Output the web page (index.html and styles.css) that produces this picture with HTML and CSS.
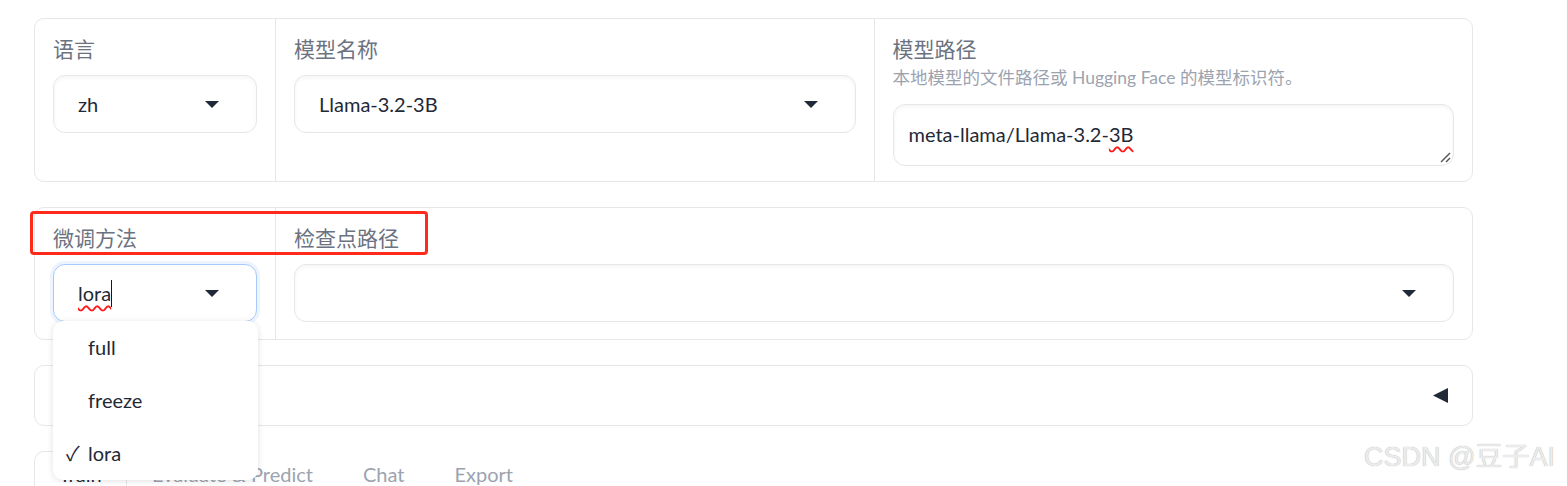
FILE: index.html
```html
<!DOCTYPE html>
<html lang="zh">
<head>
    <meta charset="UTF-8">
    <title>LLaMA Board</title>
    <link rel="stylesheet" href="styles.css">
</head>
<body>
    <div class="page">
        <div class="card">
            <div class="col col-narrow">
                <div class="label">语言</div>
                <div class="field select">
                    <span class="value">zh</span>
                    <svg class="arrow" width="14" height="7" viewBox="0 0 14 7"><polygon points="0,0 14,0 7,7" /></svg>
                </div>
            </div>
            <div class="col">
                <div class="label">模型名称</div>
                <div class="field select">
                    <span class="value">Llama-3.2-3B</span>
                    <svg class="arrow" width="14" height="7" viewBox="0 0 14 7"><polygon points="0,0 14,0 7,7" /></svg>
                </div>
            </div>
            <div class="col">
                <div class="label-group">
                    <div class="label">模型路径</div>
                    <div class="info">本地模型的文件路径或 Hugging Face 的模型标识符。</div>
                </div>
                <div class="field textarea">
                    <span class="value">meta-llama/Llama-3.2-<span class="typo">3B</span></span>
                    <svg class="resize" width="11" height="11" viewBox="0 0 11 11">
                        <line x1="1" y1="10" x2="10" y2="1" />
                        <line x1="6" y1="10" x2="10" y2="6" />
                    </svg>
                </div>
            </div>
        </div>

        <div class="card card-mark">
            <div class="col col-narrow">
                <div class="label">微调方法</div>
                <div class="field select focused">
                    <span class="value"><span class="typo">lora</span><span class="cursor"></span></span>
                    <svg class="arrow" width="14" height="7" viewBox="0 0 14 7"><polygon points="0,0 14,0 7,7" /></svg>
                    <ul class="options">
                        <li>full</li>
                        <li>freeze</li>
                        <li class="selected"><span class="check">✓</span>lora</li>
                    </ul>
                </div>
            </div>
            <div class="col">
                <div class="label">检查点路径</div>
                <div class="field select">
                    <span class="value"></span>
                    <svg class="arrow" width="14" height="7" viewBox="0 0 14 7"><polygon points="0,0 14,0 7,7" /></svg>
                </div>
            </div>
            <div class="annotation"></div>
        </div>

        <div class="card accordion">
            <span class="accordion-title">高级设置</span>
            <svg class="accordion-icon" width="15" height="15" viewBox="0 0 15 15"><polygon points="15,0 15,15 0,7.5" /></svg>
        </div>

        <div class="tabs">
            <div class="tab active">Train</div>
            <div class="tab">Evaluate &amp; Predict</div>
            <div class="tab">Chat</div>
            <div class="tab">Export</div>
        </div>
    </div>

    <div class="watermark">CSDN @豆子AI</div>
</body>
</html>
```

FILE: styles.css
```css
body {
    margin: 0;
    background: #ffffff;
    font-family: Lato, "Noto Sans CJK SC", sans-serif;
    height: 486px;
    overflow: hidden;
}

.page {
    width: 1439px;
    padding: 18px 0 0 34px;
    display: flex;
    flex-direction: column;
    gap: 25px;
}

.card {
    position: relative;
    display: flex;
    border: 1px solid #e5e7eb;
    border-radius: 10px;
    background: #ffffff;
}

.col {
    flex: 1;
    display: flex;
    flex-direction: column;
    gap: 12px;
    padding: 15px 18px 15px 18px;
    border-left: 1px solid #e5e7eb;
    min-width: 0;
}

.col-narrow {
    flex: 0 0 204px;
    border-left: none;
}

.card-mark .col {
    padding-bottom: 17px;
}

.label {
    font-size: 21px;
    line-height: 29px;
    color: #6b7280;
}

.info {
    margin-top: 2px;
    font-size: 17.5px;
    line-height: 26px;
    color: #9ca3af;
}

.label-group {
    display: flex;
    flex-direction: column;
    margin-bottom: 1px;
}

.field {
    position: relative;
    box-sizing: border-box;
    height: 58px;
    border: 1px solid #e5e7eb;
    border-radius: 12px;
    background: #ffffff;
    box-shadow: inset 0 2px 4px rgba(0, 0, 0, 0.04);
    display: flex;
    align-items: center;
    padding: 0 37px 0 24px;
    font-size: 20px;
    color: #1f2937;
}

.select .value {
    flex: 1;
}

.arrow {
    fill: #1f2937;
    margin-top: 1px;
}

.focused {
    border-color: #a5cbfa;
    box-shadow: 0 0 0 3px #edf4fe;
}

.typo {
    text-decoration: underline wavy #ff1a1a;
    text-decoration-thickness: 1.6px;
    text-underline-offset: 4px;
}

.cursor {
    display: inline-block;
    width: 1px;
    height: 27px;
    background: #111827;
    vertical-align: -6px;
}

.textarea {
    height: 62px;
    padding: 0 16px 3px 15px;
}

.resize {
    position: absolute;
    right: 2px;
    bottom: 2px;
    stroke: #555555;
    stroke-width: 1.4;
}

.options {
    position: absolute;
    top: 100%;
    left: -1px;
    width: 205px;
    margin: 0;
    padding: 0;
    list-style: none;
    background: #ffffff;
    border-radius: 10px;
    box-shadow: 0 1px 6px rgba(0, 0, 0, 0.12);
    z-index: 10;
}

.options li {
    position: relative;
    height: 53px;
    line-height: 53px;
    padding-left: 35px;
    font-size: 20px;
    color: #1f2937;
}

.check {
    position: absolute;
    left: 13px;
}

.annotation {
    position: absolute;
    left: -5px;
    top: 3px;
    width: 398px;
    height: 44px;
    box-sizing: border-box;
    border: 3px solid #ff2a1c;
    border-radius: 4px;
}

.accordion {
    height: 59px;
    align-items: center;
    justify-content: space-between;
    padding: 0 24px 0 18px;
}

.accordion-title {
    font-size: 20px;
    color: #1f2937;
}

.accordion-icon {
    fill: #1f2937;
}

.tabs {
    display: flex;
    align-items: flex-start;
}

.tab {
    box-sizing: border-box;
    padding: 8px 24px 0;
    height: 40px;
    font-size: 20px;
    line-height: 29px;
    color: #9ca3af;
    border: 1px solid transparent;
    border-bottom: none;
}

.tab.active {
    width: 93px;
    color: #1f2937;
    border-color: #e5e7eb;
    border-radius: 10px 10px 0 0;
}

.watermark {
    position: absolute;
    left: 1364px;
    top: 442px;
    font-family: "Liberation Sans", "Noto Sans CJK SC", sans-serif;
    font-size: 27px;
    line-height: 30px;
    color: #ececec;
    text-shadow: 0 0 1px #a0a0a0;
}
```
